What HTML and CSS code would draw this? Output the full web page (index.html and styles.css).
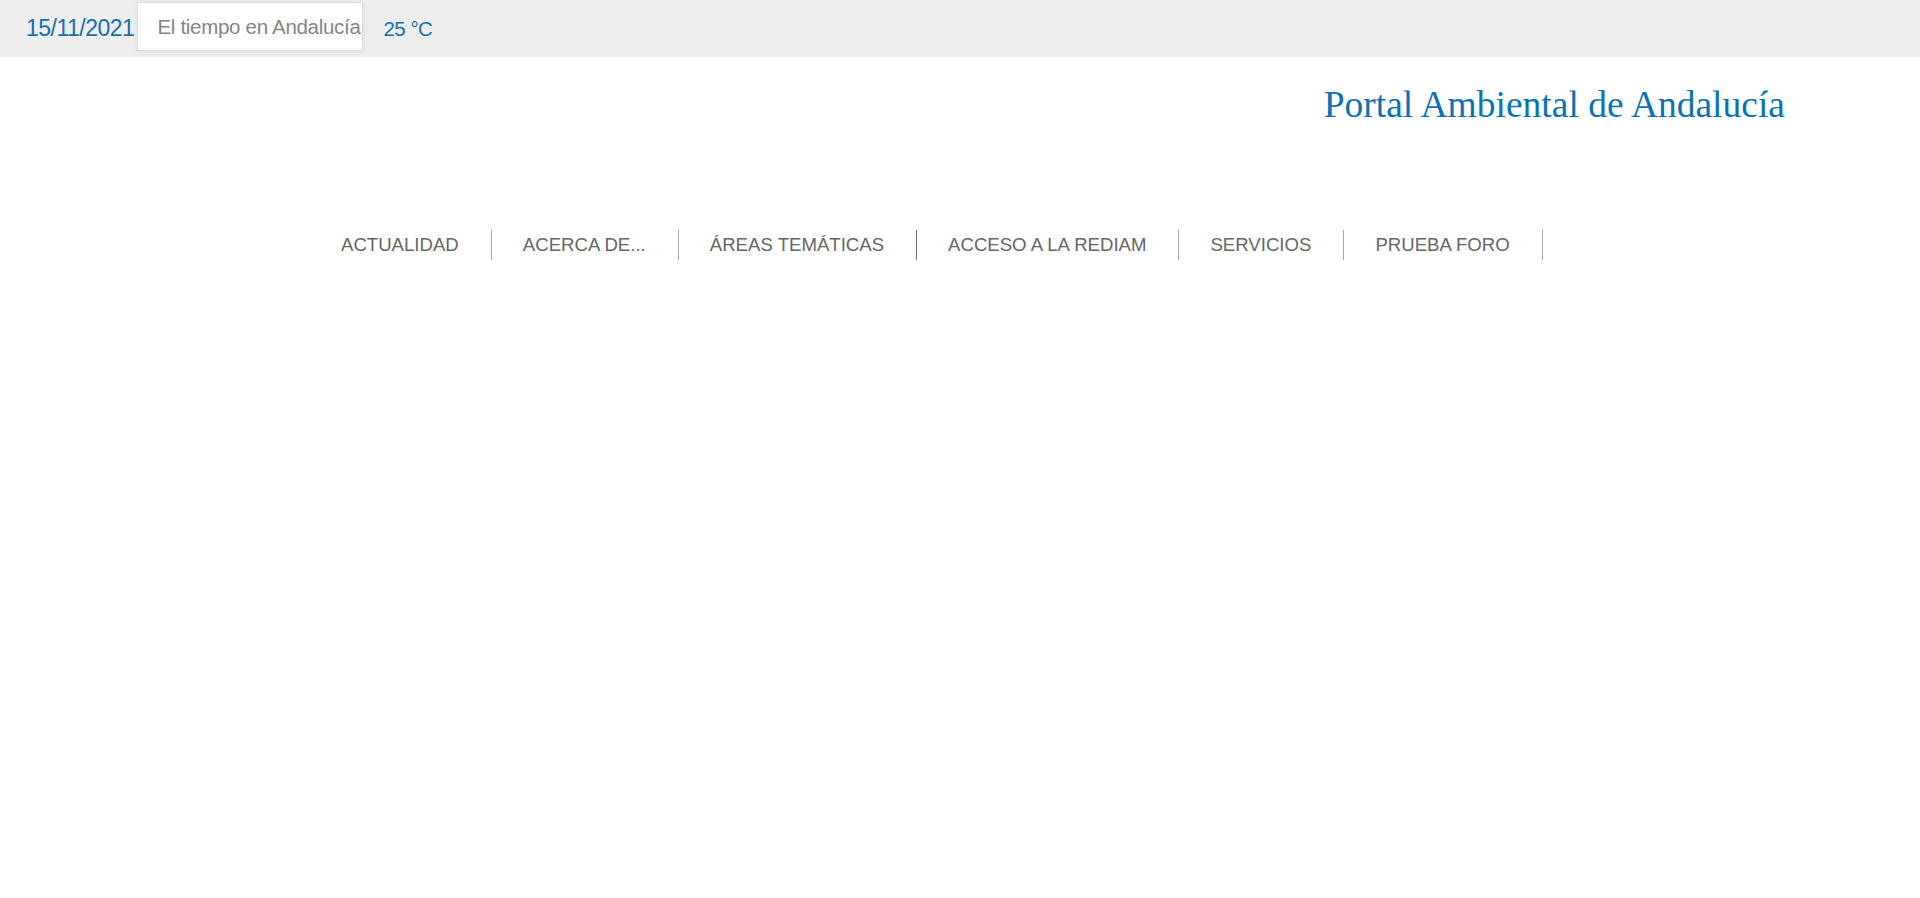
FILE: index.html
```html
<!DOCTYPE html>
<html lang="es">
<head>
<meta charset="utf-8">
<title>Portal Ambiental de Andalucía</title>
<link rel="stylesheet" href="styles.css">
</head>
<body>
<div class="topbar">
  <span class="date">15/11/2021</span>
  <div class="weather-box">El tiempo en Andalucía</div>
  <span class="temp">25 °C</span>
</div>
<header class="header">
  <h1 class="site-title">Portal Ambiental de Andalucía</h1>
</header>
<nav class="mainnav">
  <a class="nav-item" href="#">ACTUALIDAD</a>
  <a class="nav-item" href="#">ACERCA DE...</a>
  <a class="nav-item nav-item--dark" href="#">ÁREAS TEMÁTICAS</a>
  <a class="nav-item" href="#">ACCESO A LA REDIAM</a>
  <a class="nav-item" href="#">SERVICIOS</a>
  <a class="nav-item" href="#">PRUEBA FORO</a>
</nav>
</body>
</html>
```
FILE: styles.css
```css
html, body {
  margin: 0;
  padding: 0;
  background: #ffffff;
  font-family: "Liberation Sans", Arial, sans-serif;
}

.topbar {
  display: flex;
  align-items: flex-start;
  height: 57px;
  background: #eeeeee;
  padding-left: 26px;
  box-sizing: border-box;
}

.date {
  font-size: 23px;
  letter-spacing: -0.5px;
  color: #1470b0;
  line-height: 57px;
  margin-right: 3px;
}

.weather-box {
  margin-top: 2px;
  width: 226px;
  height: 49px;
  box-sizing: border-box;
  background: #ffffff;
  border: 1px solid #dcdcdc;
  box-shadow: 0 0 6px rgba(0, 0, 0, 0.08);
  padding-left: 19px;
  font-size: 20.5px;
  letter-spacing: -0.3px;
  color: #858585;
  line-height: 47px;
  white-space: nowrap;
  overflow: hidden;
}

.temp {
  margin-left: 20px;
  font-size: 20.5px;
  letter-spacing: -0.5px;
  color: #1470b0;
  line-height: 57px;
}

.header {
  display: flex;
  justify-content: flex-end;
  padding: 29px 135px 0 0;
}

.site-title {
  margin: 0;
  font-family: "Liberation Serif", "Times New Roman", serif;
  font-weight: normal;
  font-size: 37.5px;
  line-height: 37px;
  color: #0b72b5;
}

.mainnav {
  display: flex;
  padding-left: 310px;
  margin-top: 107px;
}

.nav-item {
  display: block;
  height: 30px;
  line-height: 30px;
  padding: 0 32px 0 31px;
  border-right: 1px solid #a8a8a8;
  font-size: 18.6px;
  color: #666666;
  text-decoration: none;
  white-space: nowrap;
}

.nav-item--dark {
  border-right-color: #6e6e6e;
}
```
